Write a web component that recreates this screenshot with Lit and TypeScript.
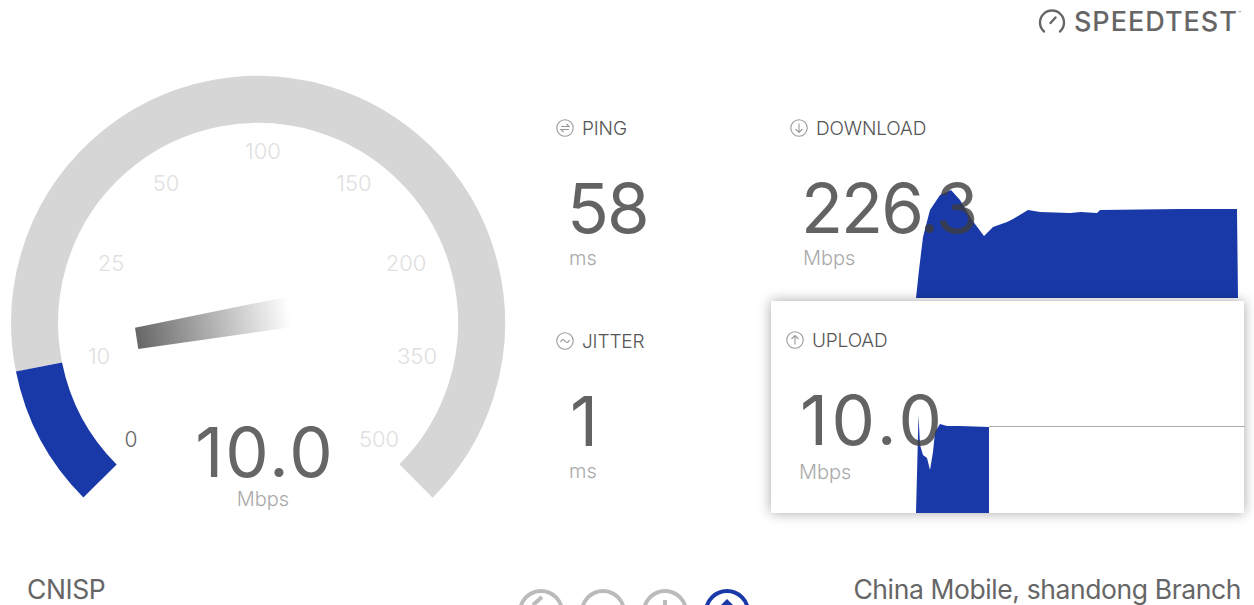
import { LitElement, html, css, svg } from 'lit';
import { customElement, property } from 'lit/decorators.js';

const BLUE = '#1a39a9';

const ICONS: Record<string, unknown> = {
  ping: svg`<path d="M5 7.5h8l-2.5-2.5M13 10.5H5l2.5 2.5" />`,
  download: svg`<path d="M9 4.5v9M5.5 10 9 13.5 12.5 10" />`,
  upload: svg`<path d="M9 13.5v-9M5.5 8 9 4.5 12.5 8" />`,
  jitter: svg`<path d="M4.5 10c1.5-3 3-3 4.5-1s3 2 4.5-1" />`,
};

@customElement('stat-tile')
export class StatTile extends LitElement {
  @property({ type: String }) icon = 'ping';
  @property({ type: String }) label = '';
  @property({ type: String }) value = '';
  @property({ type: String }) unit = '';
  @property({ type: Boolean, reflect: true }) active = false;
  // Inter's 1 is narrower than the reference face, so values with a 1 get opened up
  @property({ type: Boolean, reflect: true }) wide = false;

  static styles = css`
    :host {
      display: block;
      position: relative;
      height: 100%;
      box-sizing: border-box;
    }
    :host([active]) {
      background: #fff;
      box-shadow: 0 0 12px rgba(0, 0, 0, 0.35);
      margin: -27px 10px 0 -19px;
      height: 212px;
      padding: 26px 0 0 15px;
    }
    .label {
      display: flex;
      align-items: center;
      gap: 8px;
      height: 26px;
      font-size: 19px;
      letter-spacing: -0.15px;
      font-weight: 300;
      color: #555;
    }
    .label svg {
      width: 18px;
      height: 18px;
      fill: none;
      stroke: #9a9a9a;
      stroke-width: 1.1;
    }
    .value {
      position: relative;
      z-index: 1;
      margin: 27px 0 0 11px;
      height: 80px;
      font-size: 69px;
      line-height: 80px;
      letter-spacing: -2px;
      color: rgba(60, 60, 60, 0.8);
    }
    :host([wide]) .value {
      margin-left: 14px;
      letter-spacing: 3.5px;
    }
    .unit {
      position: relative;
      z-index: 1;
      margin-left: 13px;
      height: 20px;
      font-size: 20px;
      line-height: 20px;
      font-weight: 300;
      color: #aaa;
    }
    :host([active]) .unit {
      margin-top: 2px;
    }
    ::slotted(svg) {
      position: absolute;
      left: 126px;
      top: 75px;
    }
    :host([active]) ::slotted(svg) {
      left: 145px;
      top: 99px;
    }
  `;

  render() {
    return html`
      <div class="label">
        <svg viewBox="0 0 18 18"><circle cx="9" cy="9" r="8.2" />${ICONS[this.icon]}</svg>
        ${this.label}
      </div>
      <div class="value">${this.value}</div>
      <div class="unit">${this.unit}</div>
      <slot></slot>
    `;
  }
}

@customElement('speed-gauge')
export class SpeedGauge extends LitElement {
  static styles = css`
    :host {
      display: block;
      width: 540px;
      height: 534px;
      flex: none;
    }
    svg {
      display: block;
    }
    text {
      text-anchor: middle;
      font-family: Inter, sans-serif;
    }
    .tick {
      font-size: 22px;
      font-weight: 300;
      fill: #e0e0e0;
    }
    .tick.on {
      fill: #666;
      font-size: 21px;
    }
    .speed {
      font-size: 69px;
      letter-spacing: 2px;
      fill: #666;
    }
    .unit {
      font-size: 20px;
      font-weight: 300;
      fill: #aaa;
    }
  `;

  render() {
    const ticks: [string, number, number][] = [
      ['10', 99, 364], ['25', 111, 271], ['50', 166, 191], ['100', 263, 159],
      ['150', 354, 191], ['200', 406, 271], ['350', 417, 364], ['500', 379, 447],
    ];
    return html`
      <svg width="540" height="534" viewBox="0 40 540 534">
        <defs>
          <linearGradient id="needle" gradientUnits="userSpaceOnUse" x1="136" y1="338" x2="290" y2="312">
            <stop offset="0" stop-color="#666" />
            <stop offset="1" stop-color="#666" stop-opacity="0" />
          </linearGradient>
        </defs>
        <path d="M39 367A223.500 223.500 0 1 1 416 481" fill="none" stroke="#d6d6d6" stroke-width="47" />
        <path d="M100 481A223.500 223.500 0 0 1 39 367" fill="none" stroke="${BLUE}" stroke-width="47" />
        <polygon points="135,327.700 291,296 293,327 138.300,349" fill="url(#needle)" />
        ${ticks.map(([t, x, y]) => svg`<text class="tick" x="${x}" y="${y}">${t}</text>`)}
        <text class="tick on" x="131" y="447">0</text>
        <text class="speed" x="265" y="477">10.0</text>
        <text class="unit" x="263" y="506">Mbps</text>
      </svg>
    `;
  }
}

@customElement('app-root')
export class AppRoot extends LitElement {
  static styles = css`
    :host {
      display: block;
      width: 1254px;
      height: 605px;
      overflow: hidden;
      background: #fff;
      font-family: Inter, sans-serif;
      color: #666;
    }
    .head {
      display: flex;
      justify-content: flex-end;
      align-items: center;
      height: 42px;
      margin-bottom: -2px;
      padding-right: 13px;
      box-sizing: border-box;
    }
    .logo {
      display: flex;
      align-items: center;
      gap: 8px;
      font-size: 27px;
      font-weight: 500;
      letter-spacing: 1px;
      color: #666;
    }
    .logo svg {
      width: 28px;
      height: 26px;
      fill: none;
      stroke: #666;
      stroke-width: 2.4;
      stroke-linecap: round;
    }
    .tm {
      font-size: 5px;
      line-height: 0;
      letter-spacing: 0;
      vertical-align: 16px;
    }
    .main {
      display: flex;
      height: 534px;
    }
    .stats {
      display: grid;
      grid-template-columns: 234px 1fr;
      grid-template-rows: 213px 213px;
      margin: 75px 0 0 16px;
      flex: 1;
    }
    .foot {
      display: grid;
      grid-template-columns: 1fr auto 1fr;
      padding: 0 13px 0 27px;
      font-size: 26.5px;
      line-height: 30px;
      letter-spacing: -0.4px;
      color: #666;
    }
    .foot .isp {
      text-align: right;
      white-space: nowrap;
    }
    .nav {
      display: flex;
      gap: 16px;
      margin-top: 15px;
    }
    .nav svg {
      width: 46px;
      height: 46px;
      fill: none;
      stroke: #bbb;
      stroke-width: 4;
    }
    .nav svg.on {
      stroke: #1a39a9;
    }
    .nav svg.on .arrow {
      fill: #1a39a9;
      stroke: none;
    }
  `;

  render() {
    return html`
      <div class="head">
        <div class="logo">
          <svg viewBox="0 0 28 26">
            <path d="M6 23.500a12 12 0 1 1 16 0M12.500 15l5-5.500" />
          </svg>
          <span>SPEEDTEST<span class="tm">™</span></span>
        </div>
      </div>
      <div class="main">
        <speed-gauge></speed-gauge>
        <div class="stats">
          <stat-tile icon="ping" label="PING" value="58" unit="ms"></stat-tile>
          <stat-tile icon="download" label="DOWNLOAD" value="226.3" unit="Mbps">
            <svg width="322" height="108" viewBox="0 0 322 108">
              <polygon fill="${BLUE}" points="0,108 3,80 7,47 14,20 24,5 35,0 44,10 56,30 68,46 77,37 91,32 97,29 112,20 124,22 154,23 165,22 181,23 184,20 264,19 321,19 322,108" />
            </svg>
          </stat-tile>
          <stat-tile wide icon="jitter" label="JITTER" value="1" unit="ms"></stat-tile>
          <stat-tile active wide icon="upload" label="UPLOAD" value="10.0" unit="Mbps">
            <svg width="329" height="113" viewBox="0 0 329 113">
              <polygon fill="${BLUE}" points="0,113 2.500,15 4,45 7,55 11,58 14,70 17,52 19,32 24,24 31,26 44,26 73,27 73,113" />
              <line x1="73" y1="26.500" x2="329" y2="26.500" stroke="#aaa" stroke-width="1" />
            </svg>
          </stat-tile>
        </div>
      </div>
      <div class="foot">
        <div>CNISP</div>
        <div class="nav">
          <svg viewBox="0 0 46 46"><circle cx="23" cy="23" r="21" /><path d="M15 16l9-8" /></svg>
          <svg viewBox="0 0 46 46"><circle cx="23" cy="23" r="21" /></svg>
          <svg viewBox="0 0 46 46"><circle cx="23" cy="23" r="21" /><path d="M23 11v12" /></svg>
          <svg class="on" viewBox="0 0 46 46"><circle cx="23" cy="23" r="21" /><path class="arrow" d="M23 10l9 9H14z" /></svg>
        </div>
        <div class="isp">China Mobile, shandong Branch</div>
      </div>
    `;
  }
}
